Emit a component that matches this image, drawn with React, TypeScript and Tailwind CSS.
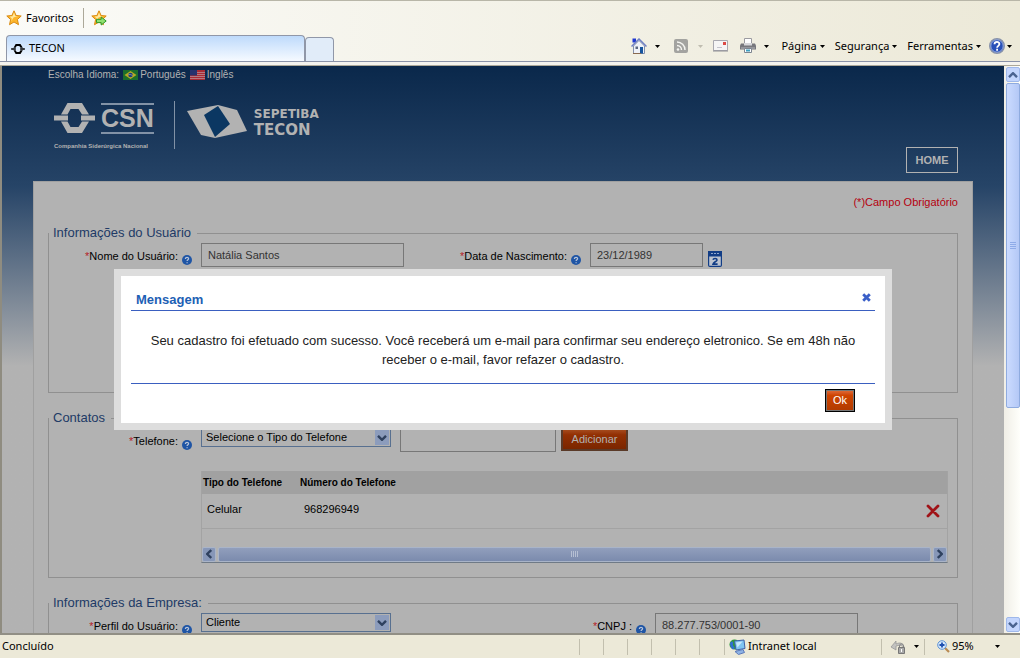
import type { ReactNode } from "react";

const uiFont = "font-['Noto_Sans',sans-serif]";

const StarIcon = ({ withArrow = false }: { withArrow?: boolean }) => (
    <svg viewBox="0 0 16 16" className="h-4 w-4" aria-hidden="true">
        <path d="M8 .8l2.1 4.7 5.1.5-3.8 3.5 1.1 5.2L8 12l-4.5 2.7 1.1-5.2L.8 6l5.1-.5z" fill="#fdb62c" stroke="#d98a12" />
        <path d="M8 2.6l1.4 3.6 2.8.4-4.4.6-2.6 4 .6-2.6-2.2-2.1 3-.3z" fill="#ffe9a0" />
        {withArrow && <path d="M5.5 9.3h4.7V7l5 4-5 4v-2.400H5.500z" fill="#8fe070" stroke="#2f9a2c" />}
    </svg>
);

const CsnMark = ({ className }: { className: string }) => (
    <svg viewBox="0 0 41 30" className={className} fill="currentColor" aria-hidden="true">
        <path d="M7 11.500 13.500 0h14.500l7 11.500h-7L24.500 6h-8L13.500 11.500z" />
        <path d="M7 18.500 13.500 30h14.500l7-11.500h-7L24.500 24h-8L13.500 18.500z" />
        <path d="M0 12.500h14v5H0zM27 12.500h14v5H27z" />
    </svg>
);

const HelpIcon = () => (
    <svg viewBox="0 0 10 10" className="h-2.5 w-2.5 shrink-0" aria-label="Ajuda" role="img">
        <circle cx="5" cy="5" r="5" fill="#1f55a5" />
        <path d="M3.400 3.900c0-2.200 3.300-2 3.200-.2 0 1-1.500 1.100-1.500 2.300M5.100 7.200v1.100" stroke="#b8c4d8" strokeWidth="1.200" fill="none" />
    </svg>
);

const Chevron = ({ className }: { className: string }) => (
    <svg viewBox="0 0 10 6" className={className} aria-hidden="true">
        <path d="M1 .8l4 4 4-4" fill="none" stroke="currentColor" strokeWidth="2.400" />
    </svg>
);

const Caret = ({ className = "text-black" }: { className?: string }) => (
    <svg viewBox="0 0 5 3" className={`h-[3px] w-[5px] shrink-0 ${className}`} aria-hidden="true">
        <path d="M0 0h5L2.500 3z" fill="currentColor" />
    </svg>
);

const HomeIcon = () => (
    <svg viewBox="0 0 16 16" className="h-4 w-4" aria-hidden="true">
        <path d="M1.500.5h3.500v4H1.500z" fill="#2038d0" />
        <path d="M2.500 8 8 2.500 13.500 8v7.500h-11z" fill="#eef1f8" stroke="#8490ac" />
        <path d="M.5 8.500 8 1l7.500 7.500" fill="none" stroke="#6f80c4" strokeWidth="1.500" />
        <path d="M9 9h3v6.500H9z" fill="#17559e" />
        <path d="M4.500 8.500h2.500v2.500H4.500z" fill="#5a6680" />
        <path d="M2 15.500h8" stroke="#8a6a50" />
    </svg>
);

const FeedIcon = () => (
    <svg viewBox="0 0 14 14" className="h-3.5 w-3.5" aria-hidden="true">
        <rect width="14" height="14" rx="2" fill="#a3a3a0" />
        <circle cx="4" cy="10.500" r="1.300" fill="#f4f4f0" />
        <path d="M3 6.500a4.500 4.500 0 0 1 4.500 4.500M3 3a8 8 0 0 1 8 8" fill="none" stroke="#f4f4f0" strokeWidth="1.500" />
    </svg>
);

const MailIcon = () => (
    <svg viewBox="0 0 15 12" className="h-3 w-[15px]" aria-hidden="true">
        <path d="M.5.5h14v10H.5z" fill="#f5f5f5" stroke="#a9a9b0" />
        <path d="M0 11h15" stroke="#8d8d94" />
        <path d="M10 2h3v3h-3z" fill="#dc4a45" />
        <path d="M4 7.500h5" stroke="#c4c4cc" />
    </svg>
);

const PrinterIcon = () => (
    <svg viewBox="0 0 16 16" className="h-4 w-4" aria-hidden="true">
        <path d="M4.500.5h7v6h-7z" fill="#fff" stroke="#9b9ba0" />
        <path d="M1 5.500h14l1 2v4H0v-4z" fill="#77777c" />
        <path d="M4 5h8v2.500H4z" fill="#d7d7da" />
        <path d="M1 10h14" stroke="#b6b6b9" />
        <path d="M4.500 10.500h7v4h-7z" fill="#fff" stroke="#7d8590" />
        <path d="M6 11.500h4v2H6z" fill="#3d9fc0" />
    </svg>
);

const BigHelpIcon = () => (
    <svg viewBox="0 0 16 16" className="h-4 w-4" aria-hidden="true">
        <circle cx="8" cy="8" r="7.300" fill="#2850b8" stroke="#8993a9" strokeWidth="1.400" />
        <circle cx="8" cy="8" r="6.200" fill="none" stroke="#d4def5" strokeWidth=".6" />
        <path d="M5.500 6.300c0-3.300 5-3.100 4.900-.2 0 1.700-2.300 1.800-2.300 3.700M8.100 10.800v1.900" stroke="#fff" strokeWidth="1.800" fill="none" />
    </svg>
);

const NetworkIcon = () => (
    <svg viewBox="0 0 17 16" className="h-4 w-[17px]" aria-hidden="true">
        <circle cx="5.500" cy="5.500" r="5" fill="#2f9a3a" />
        <path d="M1 4c2-3 4-1 3 1s3 3 1 5-4-3-4-6z" fill="#2f6fd0" />
        <path d="M5.500 2 15 1l1 8.500-9 1.500z" fill="#7fc4f2" stroke="#3f62a8" />
        <path d="M7 3.500l6.500-1-5 6z" fill="#c6e8fc" />
        <path d="M6 12.500l8-2 1.500 3-6 2z" fill="#8fb4e6" stroke="#5a78b8" />
    </svg>
);

const LockIcon = () => (
    <svg viewBox="0 0 17 14" className="h-3.5 w-[17px]" aria-hidden="true">
        <path d="M1 7l5-6v3c4-2 7-1 8 3-3-2-5-2-8-1v4z" fill="#c2c2c0" stroke="#909090" strokeWidth=".7" />
        <path d="M8.500 7.500h6v6h-6z" fill="#a8a8a8" stroke="#777" />
        <path d="M9.500 7V5.500c0-2 4-2 4 0V7" fill="none" stroke="#808080" />
        <path d="M11.500 9v3" stroke="#fff" />
    </svg>
);

const ZoomIcon = () => (
    <svg viewBox="0 0 13 13" className="h-[13px] w-[13px]" aria-hidden="true">
        <path d="M8 8l4 4" stroke="#b98a52" strokeWidth="2.200" />
        <circle cx="5" cy="5" r="4.300" fill="#d5e8fb" stroke="#5f93d5" />
        <path d="M5 2.500v5M2.500 5h5" stroke="#1f50b0" strokeWidth="1.800" />
    </svg>
);

const CalendarIcon = () => (
    <svg viewBox="0 0 14 16" className="h-4 w-3.5" aria-hidden="true">
        <rect x=".6" y=".6" width="12.800" height="14.800" rx="1.200" fill="#bcc3d0" stroke="#123d86" strokeWidth="1.200" />
        <path d="M0 0h14v5.500H0z" fill="#123d86" />
        <path d="M3 2.500h8" stroke="#8fa5cc" strokeDasharray="2 1" />
        <path d="M5 8.700c.4-1.700 4-1.700 4 .2 0 1.500-3.500 2.200-4 4.200h4.600" fill="none" stroke="#123d86" strokeWidth="1.600" />
    </svg>
);

const BrazilFlag = () => (
    <svg viewBox="0 0 15 10" className="h-2.5 w-[15px]" aria-hidden="true">
        <path d="M0 0h15v10H0z" fill="#1c6e2b" />
        <path d="M7.500 1l6 4-6 4-6-4z" fill="#b5a925" />
        <circle cx="7.500" cy="5" r="2.200" fill="#1d3d7c" />
        <path d="M5.500 4.600q2-.6 4 .9" stroke="#a9b6c6" strokeWidth=".6" fill="none" />
    </svg>
);

const UsaFlag = () => (
    <svg viewBox="0 0 15 10" className="h-2.5 w-[15px]" aria-hidden="true">
        <path d="M0 0h15v10H0z" fill="#a92b35" />
        <path d="M0 2.500h15M0 4.500h15M0 6.500h15M0 8.500h15" stroke="#b99aa0" strokeWidth=".7" />
        <path d="M0 0h7v5.500H0z" fill="#26326e" />
    </svg>
);

const ToolbarMenu = ({ children }: { children: ReactNode }) => (
    <button type="button" className="flex items-center gap-[3px]">
        {children}
        <Caret />
    </button>
);

const FieldLabel = ({ htmlFor, className, children }: { htmlFor: string; className: string; children: ReactNode }) => (
    <div className={`flex shrink-0 items-center justify-end gap-1 pt-[3px] pr-[9px] ${className}`}>
        <label htmlFor={htmlFor} className="whitespace-nowrap text-black">
            <span className="text-[#b5222a]">*</span>
            {children}
        </label>
        <span className="pt-1.5">
            <HelpIcon />
        </span>
    </div>
);

const TextField = ({ id, value, className, label }: { id: string; value?: string; className: string; label?: string }) => (
    <input
        id={id}
        type="text"
        defaultValue={value}
        aria-label={label}
        className={`h-6 shrink-0 border border-[#777] bg-transparent px-1.5 text-[#333] ${className}`}
    />
);

const SelectField = ({ id, option }: { id: string; option: string }) => (
    <div className="relative h-[19px] w-[190px] shrink-0">
        <select id={id} className="h-full w-full appearance-none border border-[#587090] bg-[#b2b2b2] pl-1 text-black">
            <option>{option}</option>
        </select>
        <span className="pointer-events-none absolute top-0.5 right-0.5 flex h-[15px] w-3.5 items-center justify-center bg-[#8c9cbc]">
            <Chevron className="h-1.5 w-2.5 text-[#2f415f]" />
        </span>
    </div>
);

const Group = ({ title, children }: { title: string; children: ReactNode }) => (
    <fieldset className="min-h-[170px] border border-[#909090]">
        <legend className="pr-1.5 pl-1 text-[13px]/5 text-[#213a66]">{title}</legend>
        {children}
    </fieldset>
);

const BrowserBars = () => (
    <header className={`shrink-0 text-[11px] text-black ${uiFont}`}>
        <div className="border-t border-[#b8b6a8] bg-gradient-to-r from-[#fbfbf8] to-[#ece9d8]">
            <div className="flex h-[34px] items-center pl-1.5">
                <button type="button" className="flex items-center gap-1">
                    <StarIcon />
                    Favoritos
                </button>
                <span className="mr-[7px] ml-2.5 h-5 w-px bg-[#aca899]" />
                <button type="button" aria-label="Adicionar a favoritos">
                    <StarIcon withArrow />
                </button>
            </div>
            <div className="flex h-[27px] items-end border-b border-[#8a92a8] pl-1.5">
                <div className="flex h-[26px] w-[299px] items-center gap-1 rounded-t border border-b-0 border-[#9097a8] bg-gradient-to-b from-[#bedafb] to-[#f6faff] pl-1">
                    <CsnMark className="h-2.5 w-3.5 text-black" />
                    TECON
                </div>
                <div className="h-6 w-[29px] rounded-t border border-b-0 border-[#9097a8] bg-[#e1ecf9]" />
                <nav className="flex h-full flex-1 items-center justify-end pr-2 pb-1">
                    <HomeIcon />
                    <span className="mr-3.5 ml-2"><Caret /></span>
                    <FeedIcon />
                    <span className="mx-2.5"><Caret className="text-[#c0bdb0]" /></span>
                    <MailIcon />
                    <span className="ml-3"><PrinterIcon /></span>
                    <span className="mr-3 ml-2"><Caret /></span>
                    <div className="flex items-center gap-2.5">
                        <ToolbarMenu>Página</ToolbarMenu>
                        <ToolbarMenu>Segurança</ToolbarMenu>
                        <ToolbarMenu>Ferramentas</ToolbarMenu>
                    </div>
                    <button type="button" aria-label="Ajuda" className="ml-2 flex items-center gap-0.5">
                        <BigHelpIcon />
                        <Caret />
                    </button>
                </nav>
            </div>
        </div>
        <div className="h-1 border-b border-[#aca899] bg-[#f4f3ee]" />
    </header>
);

const SiteHeader = () => (
    <div className="px-[46px] pt-px text-[#b2b2b2]">
        <div className="flex items-center text-[10px]/4">
            <span>Escolha Idioma:</span>
            <a href="#pt" className="ml-1 flex items-center gap-0.5">
                <BrazilFlag />
                Português
            </a>
            <a href="#en" className="ml-1 flex items-center gap-0.5">
                <UsaFlag />
                Inglês
            </a>
        </div>
        <div className="flex items-start pt-[18px] pl-1.5 font-bold">
            <div>
                <div className="flex gap-1.5">
                    <CsnMark className="mt-0.5 h-[30px] w-[41px]" />
                    <div className="mt-0.5 h-[31px] border-y-2 border-[#8292a6] text-[25px]/[27px]">CSN</div>
                </div>
                <div className="mt-2 text-[6px]/2">Companhia Siderúrgica Nacional</div>
            </div>
            <div className="ml-5 h-12 w-px bg-[#8292a6]" />
            <svg viewBox="0 0 60 33" className="mt-1 ml-3 h-[33px] w-[60px]" aria-hidden="true">
                <path d="M0 6 31 0 50 5 60 26 28 33 14 30z" fill="#b2b2b2" />
                <path d="M17 10 31 1 43 19 28 32z" fill="#0b3762" />
            </svg>
            <div className="mt-1.5 ml-[7px] font-['DejaVu_Sans',sans-serif]">
                <div className="text-xs/[15px]">SEPETIBA</div>
                <div className="text-[15px]/[17px]">TECON</div>
            </div>
        </div>
        <div className="flex justify-end">
            <button type="button" className="-mt-[3px] h-[26px] w-[52px] border border-[#b2b2b2] text-[11px] font-bold">HOME</button>
        </div>
    </div>
);

const PhoneTable = () => (
    <div className="mt-[19px] mr-[9px] ml-[152px] border border-t-0 border-[#a3a3a3] border-b-[#6f7a86]">
        <table className="w-full table-fixed text-left text-black">
            <thead>
                <tr className="h-[23px] bg-[#a1a1a1] text-[10px]">
                    <th className="w-[97px] pl-px">Tipo do Telefone</th>
                    <th className="pl-px">Número do Telefone</th>
                    <th className="w-8" aria-label="Excluir" />
                </tr>
            </thead>
            <tbody>
                <tr className="h-[34px] border-b border-[#a3a3a3]">
                    <td className="pb-1 pl-[5px]">Celular</td>
                    <td className="pb-1 pl-[5px]">968296949</td>
                    <td>
                        <button type="button" aria-label="Excluir telefone" className="block pl-[11px]">
                            <svg viewBox="0 0 14 14" className="h-3.5 w-3.5" aria-hidden="true">
                                <path d="M2 2 12 12M12 2 2 12" stroke="#a01318" strokeWidth="2.800" strokeLinecap="round" />
                            </svg>
                        </button>
                    </td>
                </tr>
            </tbody>
        </table>
        <div className="mt-[18px] flex h-[15px] gap-0.5 text-[#2f415f]">
            <button type="button" aria-label="Rolar para a esquerda" className="flex w-3.5 items-center justify-center rounded-xs border border-[#a9b4c8] bg-[#8797b8]">
                <Chevron className="h-1.5 w-2.5 shrink-0 rotate-90" />
            </button>
            <div className="flex flex-1 items-center justify-center gap-px rounded-xs border border-[#a9b4c8] bg-gradient-to-b from-[#919ebc] to-[#7b8bad]">
                <span className="h-1.5 w-px bg-[#b6c0d3]" />
                <span className="h-1.5 w-px bg-[#b6c0d3]" />
                <span className="h-1.5 w-px bg-[#b6c0d3]" />
                <span className="h-1.5 w-px bg-[#b6c0d3]" />
            </div>
            <button type="button" aria-label="Rolar para a direita" className="flex w-3.5 items-center justify-center rounded-xs border border-[#a9b4c8] bg-[#8797b8]">
                <Chevron className="h-1.5 w-2.5 shrink-0 -rotate-90" />
            </button>
        </div>
    </div>
);

const RegisterForm = () => (
    <form className="mx-[31px] mt-2 min-h-[600px] border border-[#a0a0a0] bg-[#b2b2b2] px-3.5 pt-3 text-[11px]">
        <p className="text-right leading-4 text-[#b5000f]">(*)Campo Obrigatório</p>
        <div className="mt-[13px] flex flex-col gap-[15px]">
            <Group title="Informações do Usuário">
                <div className="flex">
                    <FieldLabel htmlFor="nome" className="w-[152px]">Nome do Usuário:</FieldLabel>
                    <TextField id="nome" value="Natália Santos" className="w-[203px]" />
                    <FieldLabel htmlFor="nascimento" className="w-[186px]">Data de Nascimento:</FieldLabel>
                    <TextField id="nascimento" value="23/12/1989" className="w-[113px]" />
                    <button type="button" aria-label="Abrir calendário" className="pt-2 pl-[5px]">
                        <CalendarIcon />
                    </button>
                </div>
            </Group>
            <Group title="Contatos">
                <div className="flex">
                    <FieldLabel htmlFor="tipo" className="w-[152px]">Telefone:</FieldLabel>
                    <SelectField id="tipo" option="Selecione o Tipo do Telefone" />
                    <TextField id="telefone" label="Número do Telefone" className="ml-[9px] w-[156px]" />
                    <button type="button" className="ml-[5px] h-[23px] w-[67px] border-2 border-[#5a3a28] bg-gradient-to-b from-[#a54a1c] via-[#933003] via-25% to-[#7a2600] text-[#b2b2b2]">
                        Adicionar
                    </button>
                </div>
                <PhoneTable />
            </Group>
            <Group title="Informações da Empresa:">
                <div className="flex">
                    <FieldLabel htmlFor="perfil" className="w-[152px]">Perfil do Usuário:</FieldLabel>
                    <SelectField id="perfil" option="Cliente" />
                    <FieldLabel htmlFor="cnpj" className="w-[264px]">CNPJ :</FieldLabel>
                    <TextField id="cnpj" value="88.277.753/0001-90" className="w-[203px]" />
                </div>
            </Group>
        </div>
    </form>
);

const MessageDialog = () => (
    <div className="absolute inset-x-0 top-[203px] flex justify-center">
        <section role="dialog" aria-labelledby="dialog-title" className="w-[778px] border-[7px] border-[#ddd] bg-white px-2.5 pt-[15px] pb-[11px]">
            <div className="flex items-center justify-between border-b border-[#3a5fc0] pr-1 pb-0.5 pl-[5px]">
                <h2 id="dialog-title" className="text-[13px]/[17px] font-bold text-[#1c60b4]">Mensagem</h2>
                <button type="button" aria-label="Fechar" className="-mt-1">
                    <svg viewBox="0 0 9 9" className="h-[9px] w-[9px]" aria-hidden="true">
                        <path d="M1.200 1.200l6.600 6.600M7.800 1.200 1.200 7.800" stroke="#3a5fc8" strokeWidth="2.800" />
                    </svg>
                </button>
            </div>
            <p className="px-3 pt-5 pb-[14px] text-center text-[13px]/[19px] text-[#222]">
                Seu cadastro foi efetuado com sucesso. Você receberá um e-mail para confirmar seu endereço eletronico. Se em 48h não receber o e-mail, favor refazer o cadastro.
            </p>
            <div className="flex justify-end border-t border-[#3a5fc0] pt-[5px] pr-5">
                <button type="button" className="h-[23px] w-[30px] border border-black bg-gradient-to-b from-[#e0703a] via-[#cf4500] via-25% to-[#b03a00] text-[11px] text-white inset-ring inset-ring-[#777]">
                    Ok
                </button>
            </div>
        </section>
    </div>
);

const PageScrollbar = () => (
    <div className="flex w-4 shrink-0 flex-col gap-px bg-gradient-to-r from-[#f0eee6] to-[#fffffb] py-px pl-0.5 text-[#4a6390]">
        <button type="button" aria-label="Rolar para cima" className="flex h-[15px] items-center justify-center rounded-xs border border-[#9fb8ea] bg-[#c3d5fd]">
            <Chevron className="h-1.5 w-2.5 rotate-180" />
        </button>
        <div className="flex basis-[325px] flex-col items-center justify-center gap-px rounded-xs border border-[#8fabdf] bg-gradient-to-r from-[#cbdbff] to-[#b4c8f6]">
            <span className="h-px w-1.5 bg-[#8fabe8]" />
            <span className="h-px w-1.5 bg-[#8fabe8]" />
            <span className="h-px w-1.5 bg-[#8fabe8]" />
            <span className="h-px w-1.5 bg-[#8fabe8]" />
        </div>
        <button type="button" aria-label="Rolar para baixo" className="mt-auto flex h-[15px] items-center justify-center rounded-xs border border-[#9fb8ea] bg-[#c3d5fd]">
            <Chevron className="h-1.5 w-2.5" />
        </button>
    </div>
);

const StatusBar = () => (
    <footer className={`flex h-[25px] shrink-0 items-center border-t-2 border-[#918f85] bg-[#ece9d8] text-[11px] text-black ${uiFont}`}>
        <span className="flex-1 pl-0.5">Concluído</span>
        <div className="flex h-4 divide-x divide-[#c2bfae] border-x border-[#c2bfae]">
            <span className="w-6" />
            <span className="w-6" />
            <span className="w-6" />
            <span className="w-6" />
            <span className="w-6" />
            <span className="w-6" />
        </div>
        <div className="flex h-4 w-[157px] items-center gap-0.5 border-r border-[#c2bfae] pl-1">
            <NetworkIcon />
            Intranet local
        </div>
        <div className="flex h-4 w-[43px] items-center gap-[7px] border-r border-[#c2bfae] pl-2">
            <LockIcon />
            <Caret />
        </div>
        <button type="button" className="flex w-[95px] items-center gap-0.5 pr-5 pl-3">
            <ZoomIcon />
            <span className="flex-1 text-left">95%</span>
            <Caret />
        </button>
    </footer>
);

export default function App() {
    return (
        <div className="flex h-screen flex-col overflow-hidden font-['Liberation_Sans',Arial,sans-serif]">
            <BrowserBars />
            <div className="flex min-h-0 flex-1 border-l-2 border-[#8f8c80]">
                <main className="relative min-w-0 flex-1 overflow-hidden bg-[#b2b2b2] bg-gradient-to-b from-[#0a284b] from-0% via-[#264467] via-[120px] to-[#b2b2b2] to-[300px]">
                    <SiteHeader />
                    <RegisterForm />
                    <MessageDialog />
                </main>
                <PageScrollbar />
            </div>
            <StatusBar />
        </div>
    );
}
